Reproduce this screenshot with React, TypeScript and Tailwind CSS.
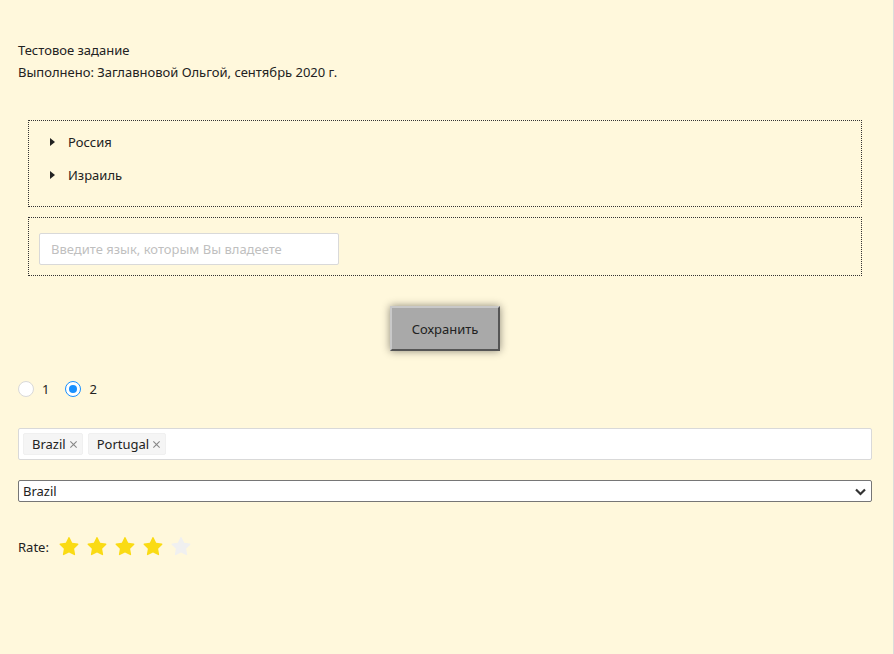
import React from "react";

const Star = ({ filled }: { filled: boolean }) => (
  <svg viewBox="64 64 896 896" width="20" height="20" fill={filled ? "#fadb14" : "#f0f0f0"}>
    <path d="M908.1 353.1l-253.9-36.9L540.7 86.1c-3.1-6.3-8.2-11.4-14.5-14.5-15.8-7.8-35-1.3-42.9 14.5L369.8 316.2l-253.9 36.9c-7 1-13.4 4.3-18.3 9.3a32.05 32.05 0 00.6 45.3l183.7 179.1-43.4 252.9a31.95 31.95 0 0046.4 33.7L512 754l227.1 119.4c6.2 3.3 13.4 4.4 20.3 3.2 17.4-3 29.1-19.5 26.1-36.9l-43.4-252.9 183.7-179.1c5-4.9 8.3-11.3 9.3-18.3 2.7-17.5-9.5-33.7-27-36.3z" />
  </svg>
);

const Tri = () => (
  <svg width="5" height="8" viewBox="0 0 5 8" className="shrink-0">
    <path d="M0 0 L5 4 L0 8 Z" fill="#222" />
  </svg>
);

const X = () => (
  <svg width="9" height="9" viewBox="0 0 10 10" className="shrink-0">
    <path d="M1.5 1.5 L8.5 8.5 M8.5 1.5 L1.5 8.5" stroke="rgba(0,0,0,0.45)" strokeWidth="1.2" />
  </svg>
);

const Tag = ({ label }: { label: string }) => (
  <div className="flex h-[22px] items-center gap-[3px] rounded-[2px] border border-[#f0f0f0] bg-[#f5f5f5] pl-[8px] pr-[4px]">
    <span>{label}</span>
    <X />
  </div>
);

export default function App() {
  return (
    <div
      className="min-h-[654px] border-r border-[#dcdcdc] bg-[#fff8dc] pl-[18px] pr-[21px] pt-[39px] text-[13px] leading-[22px] text-[#222]"
      style={{ fontFamily: '"Noto Sans", "Open Sans", sans-serif' }}
    >
      <div>
        <div>Тестовое задание</div>
        <div>Выполнено: Заглавновой Ольгой, сентябрь 2020 г.</div>
      </div>

      <div className="mx-[10px] mt-[37px] flex flex-col gap-[11px] border border-dotted border-[#333] pb-[20px] pl-[21px] pt-[10px]">
        <div className="flex h-[22px] items-center gap-[13px]">
          <Tri />
          <span>Россия</span>
        </div>
        <div className="flex h-[22px] items-center gap-[13px]">
          <Tri />
          <span>Израиль</span>
        </div>
      </div>

      <div className="mx-[10px] mt-[10px] border border-dotted border-[#333] pb-[10px] pl-[10px] pt-[15px]">
        <input
          className="h-[32px] w-[300px] rounded-[2px] border border-[#d9d9d9] bg-white px-[11px] text-[13px] outline-none placeholder:text-[#bfbfbf]"
          placeholder="Введите язык, которым Вы владеете"
        />
      </div>

      <div className="mt-[30px] flex justify-center">
        <button className="h-[45px] w-[110px] border-2 border-b-[#555] border-l-[#c8c8c8] border-r-[#555] border-t-[#c8c8c8] bg-[#a9a9a9] text-[13px] text-[#222] shadow-[0_0_8px_rgba(0,0,0,0.45)]">
          Сохранить
        </button>
      </div>

      <div className="mt-[30px] flex h-[16px] items-center">
        <div className="mr-[8px] h-[16px] w-[16px] rounded-full border border-[#d9d9d9] bg-white" />
        <span className="mr-[16px]">1</span>
        <div className="mr-[8px] flex h-[16px] w-[16px] items-center justify-center rounded-full border border-[#1890ff] bg-white">
          <div className="h-[8px] w-[8px] rounded-full bg-[#1890ff]" />
        </div>
        <span>2</span>
      </div>

      <div className="mt-[31px] flex h-[32px] items-center gap-[5px] rounded-[2px] border border-[#d9d9d9] bg-white px-[4px]">
        <Tag label="Brazil" />
        <Tag label="Portugal" />
      </div>

      <div className="relative mt-[20px] flex h-[22px] items-center rounded-[2px] border border-[#767676] bg-white pl-[4px]">
        <span>Brazil</span>
        <svg width="11" height="8" viewBox="0 0 11 8" className="absolute right-[5px] top-[7px]">
          <path d="M1 1.5 L5.5 6 L10 1.5" stroke="#333" strokeWidth="2.2" fill="none" />
        </svg>
      </div>

      <div className="mt-[34px] flex items-center">
        <span className="mr-[10px]">Rate:</span>
        <div className="flex gap-[8px]">
          <Star filled />
          <Star filled />
          <Star filled />
          <Star filled />
          <Star filled={false} />
        </div>
      </div>
    </div>
  );
}
